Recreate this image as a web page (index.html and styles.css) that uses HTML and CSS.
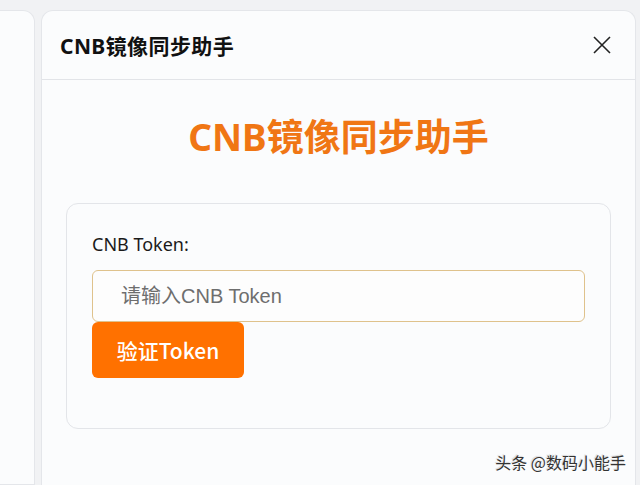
FILE: index.html
```html
<!DOCTYPE html>
<html lang="zh-CN">
<head>
  <meta charset="UTF-8">
  <meta name="viewport" content="width=device-width, initial-scale=1.0">
  <title>CNB镜像同步助手</title>
  <link rel="stylesheet" href="styles.css">
</head>
<body>
  <div class="layout">
    <div class="side-panel"></div>

    <div class="dialog">
      <div class="dialog-header">
        <h2 class="dialog-title">CNB镜像同步助手</h2>
        <button class="close-btn" aria-label="关闭">
          <svg width="18" height="18" viewBox="0 0 18 18">
            <path d="M1 1 L17 17 M17 1 L1 17" stroke="#222" stroke-width="1.6" fill="none"/>
          </svg>
        </button>
      </div>

      <div class="dialog-body">
        <h1 class="app-title">CNB镜像同步助手</h1>

        <div class="token-card">
          <label class="field-label" for="token">CNB Token:</label>
          <input class="token-input" type="text" id="token" placeholder="请输入CNB Token">
          <button class="verify-btn">验证Token</button>
        </div>
      </div>
    </div>
  </div>

  <div class="watermark">头条 @数码小能手</div>
</body>
</html>
```

FILE: styles.css
```css
* {
  margin: 0;
  padding: 0;
  box-sizing: border-box;
}

body {
  font-family: "Noto Sans", "Noto Sans CJK SC", sans-serif;
  background-color: #f1f2f4;
  height: 485px;
  overflow: hidden;
  color: #1f1f1f;
}

.layout {
  display: flex;
  gap: 6px;
  padding-top: 10px;
  height: 100%;
}

.side-panel {
  width: 35px;
  background: #fbfcfd;
  border: 1px solid #e4e6ea;
  border-left: none;
  border-radius: 0 12px 0 0;
}

.dialog {
  width: 595px;
  background: #fbfcfd;
  border: 1px solid #e4e6ea;
  border-bottom: none;
  border-radius: 12px 12px 0 0;
}

.dialog-header {
  height: 69px;
  display: flex;
  align-items: center;
  justify-content: space-between;
  padding: 0 24px 0 18px;
  border-bottom: 1px solid #e2e4e8;
}

.dialog-title {
  font-size: 21px;
  font-weight: 700;
  color: #111;
  letter-spacing: 0.4px;
}

.close-btn {
  background: none;
  border: none;
  display: flex;
  cursor: pointer;
}

.dialog-body {
  padding: 0 24px;
}

.app-title {
  text-align: center;
  color: #f07614;
  font-size: 37px;
  font-weight: 700;
  line-height: 50px;
  padding-top: 32px;
  height: 123px;
}

.token-card {
  border: 1px solid #e3e5e9;
  border-radius: 12px;
  padding: 28px 25px 50px;
  display: flex;
  flex-direction: column;
  align-items: flex-start;
}

.field-label {
  font-size: 18px;
  color: #1a1a1a;
  line-height: 24px;
  margin-bottom: 14px;
}

.token-input {
  width: 100%;
  height: 52px;
  border: 1.5px solid #dfc28c;
  border-radius: 6px;
  background: #fdfdfd;
  padding: 0 28px;
  font-size: 20px;
  font-family: "Liberation Sans", "Noto Sans CJK SC", sans-serif;
  color: #333;
}

.token-input::placeholder {
  color: #6e6e6e;
}

.verify-btn {
  width: 152px;
  height: 56px;
  background: #ff7100;
  color: #fff;
  border: none;
  border-radius: 6px;
  font-size: 21px;
  font-weight: 500;
  font-family: "Noto Sans CJK SC", sans-serif;
  cursor: pointer;
}

.watermark {
  position: absolute;
  right: 14px;
  bottom: 11px;
  font-size: 16px;
  color: #333;
  text-shadow: 1px 1px 1px rgba(255, 255, 255, 0.9), -1px -1px 1px rgba(0, 0, 0, 0.15);
  font-family: "Noto Sans CJK SC", sans-serif;
}
```
